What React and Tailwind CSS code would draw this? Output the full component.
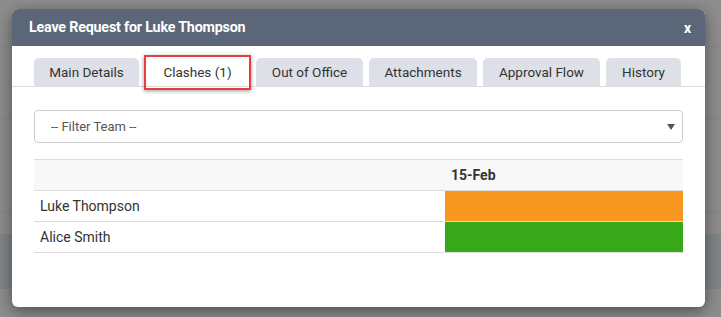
import React from 'react';

const tabs = [
  { name: 'Main Details', w: 'w-[105px]' },
  { name: 'Clashes (1)', w: 'w-[105px]', active: true },
  { name: 'Out of Office', w: 'w-[107px]' },
  { name: 'Attachments', w: 'w-[108px]' },
  { name: 'Approval Flow', w: 'w-[117px]' },
  { name: 'History', w: 'w-[75px]' },
];

const rows = [
  { name: 'Luke Thompson', color: 'bg-[#f8971f]' },
  { name: 'Alice Smith', color: 'bg-[#38a81a]' },
];

const Backdrop = () => (
  <div className="h-[317px] w-full bg-[#8d8d8d] flex flex-col">
    <div className="h-[47px] border-b border-[#858585]" />
    <div className="h-[72px] border-b border-[#858585]" />
    <div className="h-[93px] border-b border-[#858585]" />
    <div className="h-[22px]" />
    <div className="h-[55px] bg-[#7f8587]" />
  </div>
);

const App = () => {
  return (
    <div className="relative w-[721px] h-[317px] overflow-hidden font-['Roboto','Liberation_Sans',sans-serif]">
      <Backdrop />

      <div className="absolute left-[12px] top-[9px] w-[693px] h-[298px] bg-white rounded-[6px] overflow-hidden shadow-[0_4px_16px_rgba(0,0,0,0.45)]">
        <div className="h-[37px] bg-[#5b6779] flex items-center justify-between pl-[17px] pr-[14px]">
          <span className="text-white font-bold text-[14.3px] tracking-[-0.2px]">Leave Request for Luke Thompson</span>
          <span className="text-white font-bold text-[14px] leading-none">x</span>
        </div>

        <div className="pt-[12px]">
          <div className="flex gap-[6px] pl-[22px] border-b border-[#dddddd] h-[29px]">
            {tabs.map((t) => (
              <div
                key={t.name}
                className={`relative ${t.w} h-[28px] flex items-center justify-center rounded-t-[5px] text-[13.5px] text-[#333] ${
                  t.active ? 'bg-white' : 'bg-[#dde0e7]'
                }`}
              >
                {t.name}
                {t.active && (
                  <span className="absolute -top-[3px] -bottom-[4px] -left-[1px] -right-[1px] border-2 border-[#ea3b40] shadow-[0_1px_4px_rgba(0,0,0,0.4)]" />
                )}
              </div>
            ))}
          </div>

          <div className="px-[22px]">
            <div className="mt-[23px] h-[33px] border border-[#cccccc] rounded-[4px] flex items-center justify-between pl-[16px] pr-[7px]">
              <span className="text-[13px] text-[#555]">-- Filter Team --</span>
              <svg width="8" height="8" viewBox="0 0 8 8">
                <path d="M0 1 L8 1 L4 7 Z" fill="#555" />
              </svg>
            </div>

            <div className="mt-[16px] border-t border-[#dddddd]">
              <div className="flex h-[31px] bg-[#f8f8f8] border-b border-[#dddddd]">
                <div className="w-[411px]" />
                <div className="flex-1 flex items-center pl-[6px] text-[14px] font-bold text-[#333]">15-Feb</div>
              </div>
              {rows.map((r) => (
                <div key={r.name} className="flex h-[31px] border-b border-[#dddddd]">
                  <div className="w-[411px] flex items-center pl-[6px] text-[14px] text-[#333]">{r.name}</div>
                  <div className={`flex-1 ${r.color}`} />
                </div>
              ))}
            </div>
          </div>
        </div>
      </div>
    </div>
  );
};

export default App;
